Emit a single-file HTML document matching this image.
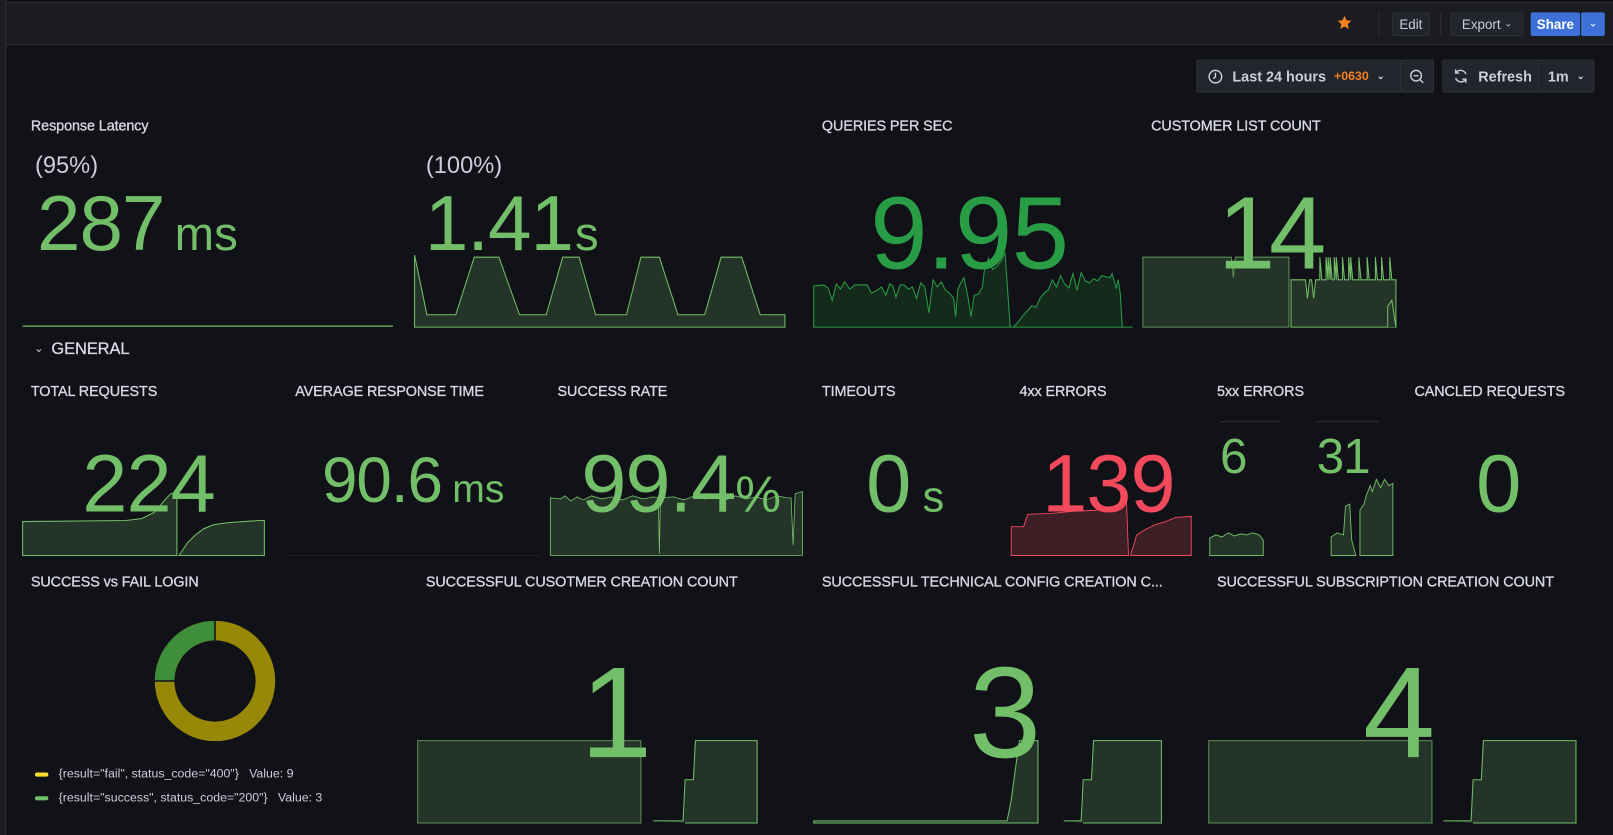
<!DOCTYPE html>
<html><head><meta charset="utf-8"><style>
html,body{margin:0;padding:0;background:#111217;overflow:hidden;width:1613px;height:835px}
#w{position:absolute;left:0;top:0;width:1568px;height:812px;transform:scale(1.02870);transform-origin:0 0;font-family:"Liberation Sans",sans-serif;color:#ccccdc}
.a{position:absolute}
.t{position:absolute;font-size:14px;font-weight:normal;color:#d8d9e6;white-space:nowrap;letter-spacing:-0.1px;line-height:16px;-webkit-text-stroke:0.3px #d8d9e6}
.n{position:absolute;line-height:1;white-space:nowrap;color:#73bf69;letter-spacing:-1px}
.btn{position:absolute;background:#22252b;border:1px solid #2e3036;border-radius:2px;font-size:13px;color:#ccccdc;box-sizing:border-box;display:flex;align-items:center;justify-content:center}
svg{position:absolute;overflow:visible}
</style></head><body><div id="w">
<div class="a" style="left:0;top:2px;width:1568px;height:42px;background:#1a1c21;border-top:1px solid #2c2e33;border-bottom:1px solid #2c2e33;box-sizing:border-box"></div>
<div class="a" style="left:0;top:0;width:5px;height:812px;background:#1a1c21;border-right:1px solid #2c2e33"></div>
<svg style="left:1299px;top:14px" width="16" height="16" viewBox="0 0 24 24"><path d="M12 2l3 6.5 7 .8-5.2 4.8 1.4 7L12 17.6 5.8 21.1l1.4-7L2 9.3l7-.8z" fill="#f5821f"/></svg>
<div class="a" style="left:1340px;top:12px;width:1px;height:23px;background:#2e3036"></div>
<div class="btn" style="left:1353px;top:12px;width:37px;height:23px">Edit</div>
<div class="a" style="left:1400px;top:12px;width:1px;height:23px;background:#2e3036"></div>
<div class="btn" style="left:1410px;top:12px;width:71px;height:23px">Export&nbsp;<span style="font-size:9px">⌄</span></div>
<div class="btn" style="left:1488px;top:12px;width:48px;height:23px;background:#3d71d9;border-color:#3d71d9;color:#fff;font-weight:bold">Share</div>
<div class="btn" style="left:1537px;top:12px;width:23px;height:23px;background:#3d71d9;border-color:#3d71d9;color:#fff;font-size:10px">⌄</div>
<div class="btn" style="left:1163px;top:58px;width:199px;height:32px;justify-content:flex-start;padding-left:10px;font-size:14px;font-weight:bold">
<svg style="position:relative;margin-right:9px" width="15" height="15" viewBox="0 0 16 16"><circle cx="8" cy="8" r="6.5" fill="none" stroke="#ccccdc" stroke-width="1.5"/><path d="M8 4v4.3L5.8 10" fill="none" stroke="#ccccdc" stroke-width="1.5"/></svg>Last 24 hours&nbsp;&nbsp;<span style="color:#f5821f;font-size:12px">+0630</span>&nbsp;&nbsp;<span style="font-size:9px">⌄</span></div>
<div class="btn" style="left:1361px;top:58px;width:33px;height:32px"><svg style="position:relative" width="15" height="15" viewBox="0 0 16 16"><circle cx="7" cy="7" r="5.5" fill="none" stroke="#ccccdc" stroke-width="1.5"/><path d="M4.5 7h5M11 11l3.5 3.5" stroke="#ccccdc" stroke-width="1.5"/></svg></div>
<div class="btn" style="left:1402px;top:58px;width:94px;height:32px;font-size:14px;font-weight:bold;justify-content:flex-start;padding-left:9px"><svg style="position:relative;margin-right:9px" width="16" height="16" viewBox="0 0 16 16"><path d="M13 6A5.5 5.5 0 0 0 3.5 4.5M3 10a5.5 5.5 0 0 0 9.5 1.5M3 1.5v3.5h3.5M13 14.5V11H9.5" fill="none" stroke="#ccccdc" stroke-width="1.4"/></svg>Refresh</div>
<div class="btn" style="left:1495px;top:58px;width:55px;height:32px;font-size:14px;font-weight:bold">1m&nbsp;&nbsp;<span style="font-size:9px">⌄</span></div>

<div class="t" style="left:30px;top:114px">Response Latency</div>
<div class="t" style="left:799px;top:114px">QUERIES PER SEC</div>
<div class="t" style="left:1119px;top:114px">CUSTOMER LIST COUNT</div>
<div class="n" style="left:34px;top:149px;font-size:23px;color:#ccccdc;letter-spacing:0">(95%)</div>
<div class="n" style="left:414px;top:149px;font-size:23px;color:#ccccdc;letter-spacing:0">(100%)</div>

<svg style="left:22px;top:248px" width="360" height="72"><path d="M0 69H360" stroke="#73bf69" stroke-width="1.2"/></svg>
<svg style="left:403px;top:248px" width="360" height="72"><path d="M0 70V0L12 58H40L58 2H82L102 58H128L144 2H160L176 58H206L220 2H238L256 58H282L298 2H318L336 58H360V70Z" fill="#243428" stroke="#73bf69" stroke-width="1"/></svg>
<div class="n" style="left:36px;top:180px;font-size:76px">287<span style="font-size:46px;letter-spacing:0;margin-left:10px">ms</span></div>
<div class="n" style="left:413px;top:180px;font-size:76px">1.41<span style="font-size:46px;letter-spacing:0;margin-left:2px">s</span></div>

<svg style="left:791px;top:240px" width="310" height="80"><path d="M0 78V38L10 37L14 40L18 52L22 36L26 41L30 34L35 41L40 37L52 37L56 45L62 42L66 39L70 47L74 36L77 38L80 49L84 37L88 37L92 41L96 39L100 50L104 35L108 39L112 64L116 32L120 39L124 34L128 42L132 45L136 50L138 68L140 42L142 37L146 30L150 49L153 68L156 47L160 46L164 39L166 22L170 11L174 22L178 19L182 14L186 6L191 78L194 78L198 74L204 66L208 62L212 57L216 59L220 50L224 45L228 42L232 32L236 39L240 28L244 36L248 40L252 26L256 42L260 25L264 33L268 35L272 31L276 33L280 28L284 29L288 30L290 26L294 40L296 32L298 45L300 78L310 78Z" fill="#142a1c" stroke="#299c46" stroke-width="1"/></svg>
<div class="n" style="left:846px;top:177px;font-size:100px;color:#299c46;letter-spacing:-0.5px">9.95</div>

<svg style="left:1111px;top:240px" width="250" height="80"><path d="M0 78V10H86L88 30L90 10H142V78Z" fill="#243428" stroke="#5b8f55" stroke-width="1"/><path d="M144 78V32H158L160 50L162 32H164L166 50L168 32H172V10L174 32H178V10L180 32V10L182 32V10L184 32H186V10L188 32V10L190 32H194V10L196 32H200V10L202 32V10L204 32H210V10L212 32H218V10L220 32H226V10L228 32H232V10L234 32H240V10L242 32H246V78Z" fill="#243428" stroke="#73bf69" stroke-width="1"/><path d="M238 78V58L242 52L246 78" fill="#243428" stroke="#73bf69"/></svg>
<div class="n" style="left:1184px;top:177px;font-size:100px;color:#73bf69;letter-spacing:-6px">14</div>

<div class="a" style="left:33px;top:332px;font-size:11px;color:#ccccdc">⌄</div>
<div class="t" style="left:50px;top:332px;font-size:16px">GENERAL</div>

<div class="t" style="left:30px;top:372px">TOTAL REQUESTS</div>
<div class="t" style="left:287px;top:372px">AVERAGE RESPONSE TIME</div>
<div class="t" style="left:542px;top:372px">SUCCESS RATE</div>
<div class="t" style="left:799px;top:372px">TIMEOUTS</div>
<div class="t" style="left:991px;top:372px">4xx ERRORS</div>
<div class="t" style="left:1183px;top:372px">5xx ERRORS</div>
<div class="t" style="left:1375px;top:372px">CANCLED REQUESTS</div>

<svg style="left:22px;top:470px" width="250" height="72"><path d="M0 70V37L100 36L116 34L128 28L140 14L144 10L150 8L150 70Z" fill="#243428" stroke="#73bf69"/><path d="M152 70L160 58L168 50L176 44L186 40L200 38L230 36L235 36V70Z" fill="#243428" stroke="#73bf69"/></svg>
<svg style="left:279px;top:470px" width="246" height="72"><path d="M0 70H246" stroke="#1e2026"/></svg>
<svg style="left:535px;top:470px" width="248" height="72"><path d="M0 70V14L10 15L14 12L20 17L26 13L32 16L40 12L50 15L60 13L70 16L80 12L90 15L100 13L105 14L106 68L107 14L120 13L130 16L140 12L150 15L160 13L170 16L180 12L190 15L200 13L210 16L220 12L230 14L234 14L236 60L238 10L245 8V70Z" fill="#243428" stroke="#73bf69" stroke-width="0.8"/></svg>
<svg style="left:983px;top:470px" width="180" height="72"><path d="M0 70V42H12L16 30L40 29L60 27L82 26L100 22L108 18L112 15L114 70Z" fill="#3d1f25" stroke="#f2495c" stroke-width="0.9"/><path d="M116 70L122 50L130 45L140 40L150 37L160 33L175 32V70Z" fill="#3d1f25" stroke="#f2495c" stroke-width="0.9"/></svg>
<svg style="left:1176px;top:400px" width="190" height="142"><path d="M10 10H68M104 10H164" stroke="#3a3c42" stroke-width="0.8"/><path d="M0 140V123L6 120L12 122L18 118L24 121L30 119L36 120L42 118L48 120L52 125V140Z" fill="#243428" stroke="#73bf69" stroke-width="0.9"/><path d="M118 140V122L124 118L130 120L132 92L136 90L138 125L142 140Z" fill="#243428" stroke="#73bf69" stroke-width="0.9"/><path d="M146 140V96L150 90L152 82L156 72L158 78L162 66L166 74L170 66L174 72L178 70V140Z" fill="#243428" stroke="#73bf69" stroke-width="0.9"/></svg>

<div class="n" style="left:80px;top:430px;font-size:79px">224</div>
<div class="n" style="left:313px;top:437px;font-size:62px">90.6<span style="font-size:38px;letter-spacing:0;margin-left:10px">ms</span></div>
<div class="n" style="left:565px;top:430px;font-size:79px">99.4<span style="font-size:50px">%</span></div>
<div class="n" style="left:842px;top:430px;font-size:79px">0<span style="font-size:42px;letter-spacing:0;margin-left:12px">s</span></div>
<div class="n" style="left:1013px;top:430px;font-size:79px;color:#f2495c">139</div>
<div class="n" style="left:1186px;top:421px;font-size:48px">6</div>
<div class="n" style="left:1280px;top:421px;font-size:48px">31</div>
<div class="n" style="left:1435px;top:430px;font-size:79px">0</div>

<div class="t" style="left:30px;top:557px">SUCCESS vs FAIL LOGIN</div>
<div class="t" style="left:414px;top:557px">SUCCESSFUL CUSOTMER CREATION COUNT</div>
<div class="t" style="left:799px;top:557px">SUCCESSFUL TECHNICAL CONFIG CREATION C...</div>
<div class="t" style="left:1183px;top:557px">SUCCESSFUL SUBSCRIPTION CREATION COUNT</div>

<svg style="left:150px;top:603px" width="118" height="118" viewBox="-59 -59 118 118">
<circle r="49" fill="none" stroke="#978807" stroke-width="19"/>
<path d="M0 -49A49 49 0 0 0 -49 0" fill="none" stroke="#3f8e3b" stroke-width="19"/>
<path d="M0 -59V-39M-59 0H-39" stroke="#111217" stroke-width="1.5"/>
</svg>
<div class="a" style="left:34px;top:751px;width:13px;height:4px;border-radius:2px;background:#fade2a"></div>
<div class="a" style="left:34px;top:774px;width:13px;height:4px;border-radius:2px;background:#73bf69"></div>
<div class="a" style="left:57px;top:745px;font-size:12px;color:#ccccdc;white-space:nowrap">{result="fail", status_code="400"}&nbsp;&nbsp;&nbsp;Value: 9</div>
<div class="a" style="left:57px;top:768px;font-size:12px;color:#ccccdc;white-space:nowrap">{result="success", status_code="200"}&nbsp;&nbsp;&nbsp;Value: 3</div>

<svg style="left:406px;top:718px" width="360" height="82"><path d="M0 82V2H217V82Z" fill="#243428" stroke="#5b8f55"/><path d="M229 80H258L260 40H268L270 2H330V82H260" fill="#243428" stroke="#73bf69"/></svg>
<svg style="left:791px;top:718px" width="360" height="82"><path d="M0 80H188L192 60L196 30L200 2H218V82H0Z" fill="#243428" stroke="#73bf69"/><path d="M243 80H260L262 40H270L272 2H338V82H262" fill="#243428" stroke="#73bf69"/></svg>
<svg style="left:1175px;top:718px" width="360" height="82"><path d="M0 82V2H217V82Z" fill="#243428" stroke="#5b8f55"/><path d="M228 80H255L257 40H265L267 2H357V82H257" fill="#243428" stroke="#73bf69"/></svg>

<div class="n" style="left:564px;top:630px;font-size:126px">1</div>
<div class="n" style="left:942px;top:630px;font-size:126px">3</div>
<div class="n" style="left:1325px;top:630px;font-size:126px">4</div>
</div></body></html>
